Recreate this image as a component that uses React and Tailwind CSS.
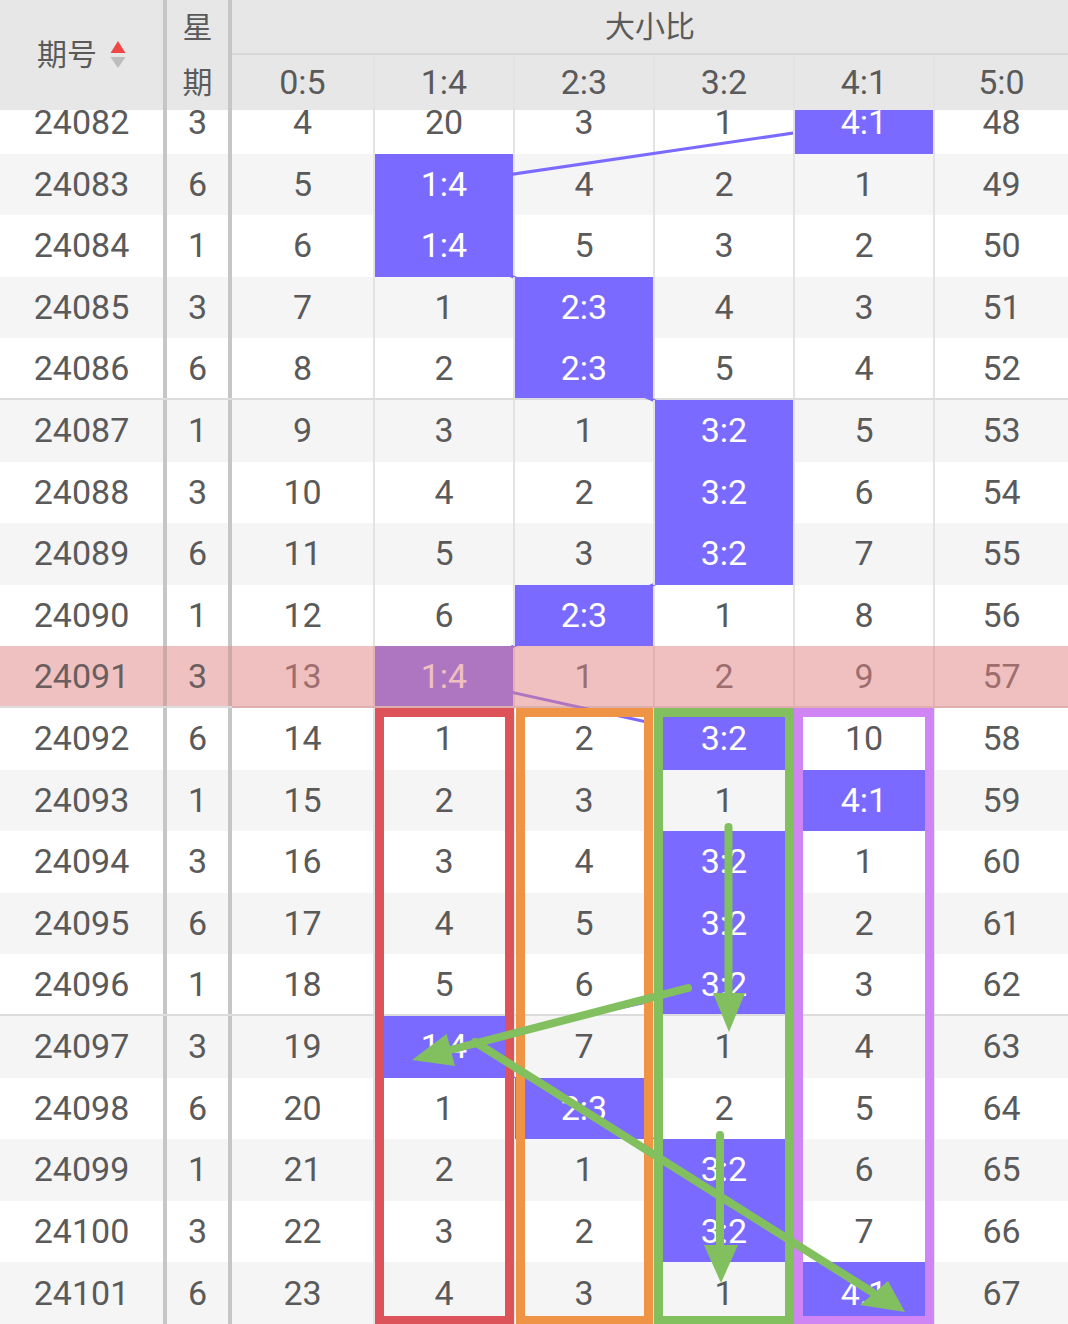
import React from 'react';

// 大小比 走势表
const RATIOS = ['0:5', '1:4', '2:3', '3:2', '4:1', '5:0'];

// column widths (first ratio col has no left line)
const colCls = [
  'w-[141px]',
  'w-[140px] border-l-2 border-[#e3e3e3]',
  'w-[140px] border-l-2 border-[#e3e3e3]',
  'w-[140px] border-l-2 border-[#e3e3e3]',
  'w-[140px] border-l-2 border-[#e3e3e3]',
  'flex-1 border-l-2 border-[#e3e3e3]',
];

const CENTER_X = [302.5, 443, 583, 723, 863, 1000.5];
const ROW_H = 61.6;
const PICKED = 9; // 24091

// [期号, 星期, hit column, values]
const rows = [
  ['24082', '3', 4, [4, 20, 3, 1, 0, 48]],
  ['24083', '6', 1, [5, 0, 4, 2, 1, 49]],
  ['24084', '1', 1, [6, 0, 5, 3, 2, 50]],
  ['24085', '3', 2, [7, 1, 0, 4, 3, 51]],
  ['24086', '6', 2, [8, 2, 0, 5, 4, 52]],
  ['24087', '1', 3, [9, 3, 1, 0, 5, 53]],
  ['24088', '3', 3, [10, 4, 2, 0, 6, 54]],
  ['24089', '6', 3, [11, 5, 3, 0, 7, 55]],
  ['24090', '1', 2, [12, 6, 0, 1, 8, 56]],
  ['24091', '3', 1, [13, 0, 1, 2, 9, 57]],
  ['24092', '6', 3, [14, 1, 2, 0, 10, 58]],
  ['24093', '1', 4, [15, 2, 3, 1, 0, 59]],
  ['24094', '3', 3, [16, 3, 4, 0, 1, 60]],
  ['24095', '6', 3, [17, 4, 5, 0, 2, 61]],
  ['24096', '1', 3, [18, 5, 6, 0, 3, 62]],
  ['24097', '3', 1, [19, 0, 7, 1, 4, 63]],
  ['24098', '6', 2, [20, 1, 0, 2, 5, 64]],
  ['24099', '1', 3, [21, 2, 1, 0, 6, 65]],
  ['24100', '3', 3, [22, 3, 2, 0, 7, 66]],
  ['24101', '6', 4, [23, 4, 3, 1, 0, 67]],
];

const GREEN = '#82c05f';

function Header() {
  return (
    <div className="flex h-[110px] bg-[#e7e7e7] text-[#5a5a5a]">
      <div className="w-[163px] flex items-center justify-center gap-[13px]">
        <span className="text-[30px] leading-none">期号</span>
        <svg width="16" height="28" viewBox="0 0 16 28">
          <polygon points="0.5,12 15.5,12 8,0" fill="#ef4747" />
          <polygon points="0.5,16 15.5,16 8,27" fill="#bdbdbd" />
        </svg>
      </div>
      <div className="w-[4px] bg-[#c6c6c6]" />
      <div className="w-[61px] flex flex-col text-[30px]">
        <div className="h-[55px] flex items-center justify-center">星</div>
        <div className="h-[55px] flex items-center justify-center">期</div>
      </div>
      <div className="w-[4px] bg-[#c6c6c6]" />
      <div className="flex-1 flex flex-col">
        <div className="h-[55px] border-b-2 border-[#d8d8d8] flex items-center justify-center text-[30px]">
          大小比
        </div>
        <div className="h-[55px] flex text-[34px]">
          {RATIOS.map((r, j) => (
            <div key={r} className={`${colCls[j]} flex items-center justify-center`}>
              {r}
            </div>
          ))}
        </div>
      </div>
    </div>
  );
}

function Row({ row, i }) {
  const [id, week, hit, vals] = row;
  const groupEnd = i === 4 || i === 9 || i === 14;
  const picked = i === PICKED;
  const bg = picked ? 'bg-[#f0c1c1] text-[#6a5e5e]' : i % 2 ? 'bg-[#f5f5f5]' : 'bg-white';
  const bar = picked ? 'bg-[#cfa8a8]' : 'bg-[#c6c6c6]';
  return (
    <div className={`flex h-[61.6px] ${bg} ${groupEnd ? 'border-b-2 border-[#dcdcdc]' : ''}`}>
      <div className="w-[163px] flex items-center justify-center">{id}</div>
      <div className={`w-[4px] ${bar}`} />
      <div className="w-[61px] flex items-center justify-center">{week}</div>
      <div className={`w-[4px] ${bar}`} />
      {vals.map((v, j) => (
        <div
          key={j}
          className={`${colCls[j]} flex items-center justify-center ${
            j === hit ? 'relative z-10 bg-[#7b6aff] text-white' : picked ? 'bg-white text-[#5a5a5a]' : ''
          }`}
        >
          {j === hit ? RATIOS[j] : v}
        </div>
      ))}
    </div>
  );
}

export default function App() {
  const points = rows
    .map(([, , hit], i) => `${CENTER_X[hit]},${30.8 + i * ROW_H}`)
    .join(' ');

  return (
    <div className="relative w-[1068px] h-[1324px] overflow-hidden bg-white text-[#5a5a5a] font-['Roboto','Noto_Sans_CJK_SC',sans-serif]">
      <Header />

      <div className="h-[1214px] overflow-hidden">
        <div className="relative -mt-[18px] text-[34px]">
          {rows.map((row, i) => (
            <Row key={row[0]} row={row} i={i} />
          ))}

          {/* trend line, under the hit cells */}
          <svg className="absolute left-0 top-0 pointer-events-none" width="1068" height="1232">
            <polyline points={points} fill="none" stroke="#7b6aff" strokeWidth="3" />
          </svg>

          {/* selected row 24091, tint over the ratio columns */}
          <div className="absolute left-[232px] right-0 top-[554.4px] h-[61.6px] z-20 bg-[#e18181]/50" />
        </div>
      </div>

      {/* hand-drawn annotations */}
      <svg className="absolute left-0 top-0 z-30 pointer-events-none" width="1068" height="1324">
        <g fill="none" strokeWidth="9">
          <rect x="379.5" y="712.5" width="130" height="608" stroke="#dc5459" />
          <rect x="520.5" y="712.5" width="128" height="608" stroke="#ee9444" />
          <rect x="658.5" y="712.5" width="131" height="608" stroke={GREEN} />
          <rect x="798.5" y="712.5" width="131" height="608" stroke="#cf85f4" />
        </g>
        <g stroke={GREEN} strokeWidth="8" strokeLinecap="round">
          <line x1="728.5" y1="827" x2="728.5" y2="1000" />
          <line x1="688" y1="988" x2="450" y2="1050" />
          <line x1="475" y1="1042" x2="872" y2="1292" />
          <line x1="720" y1="1135" x2="720" y2="1250" />
        </g>
        <g fill={GREEN}>
          <polygon points="713,993 745,993 729,1032" />
          <polygon points="412,1060 455,1066 446.6,1034" />
          <polygon points="905,1312 860,1305 888,1281" />
          <polygon points="704,1245 738,1245 721,1283" />
        </g>
      </svg>
    </div>
  );
}
